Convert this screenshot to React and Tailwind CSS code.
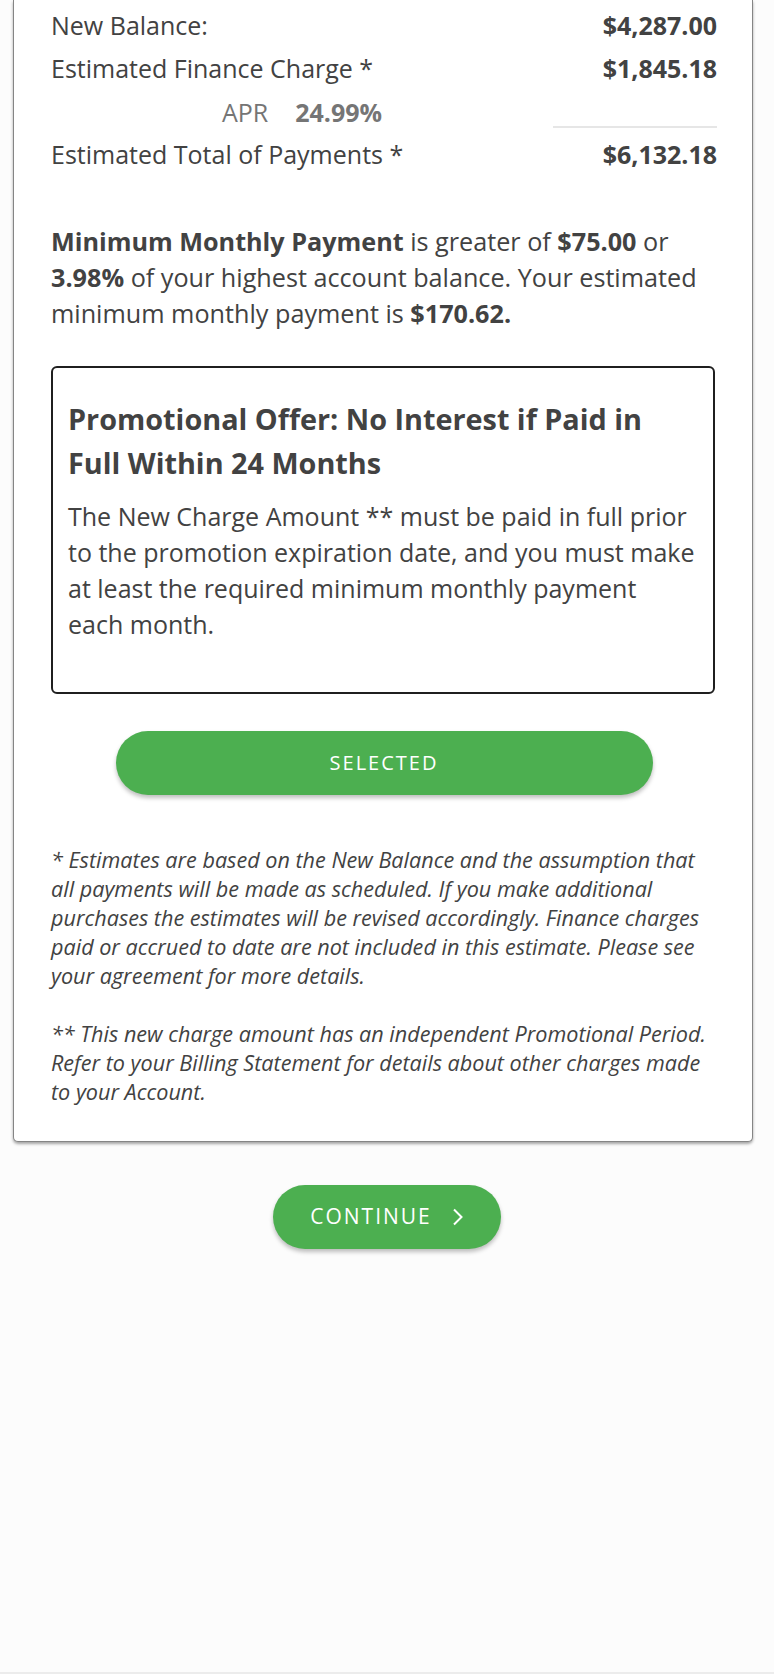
import React from 'react';

const rows = [
    { label: 'New Balance:', value: '$4,287.00' },
    { label: 'Estimated Finance Charge *', value: '$1,845.18' },
];

export default function App() {
    return (
        <div className="h-[1674px] bg-[#fcfcfc] border-b-2 border-[#ececec] font-['Open_Sans',sans-serif] text-[#424242] flex flex-col">
            <div className="ml-[13px] w-[740px] bg-white border-x border-b border-[#858585] rounded-b-[5px] shadow-[0_2px_3px_rgba(0,0,0,0.35)] pl-[37px] pr-[35px] pt-[4px] pb-[35px]">
                {rows.map((r) => (
                    <div key={r.label} className="flex justify-between h-[43px] leading-[43px] text-[25px]">
                        <span>{r.label}</span>
                        <span className="font-bold">{r.value}</span>
                    </div>
                ))}
                <div className="flex h-[38px] text-[25px]">
                    <div className="pl-[171px] pt-[7px] leading-[30px] text-[#757575]">
                        APR<span className="ml-[27px] font-bold">24.99%</span>
                    </div>
                    <div className="ml-auto w-[164px] self-end border-b-2 border-[#e6e6e6]" />
                </div>
                <div className="flex justify-between h-[43px] leading-[43px] text-[25px] mt-[5px]">
                    <span>Estimated Total of Payments *</span>
                    <span className="font-bold">$6,132.18</span>
                </div>

                <p className="mt-[47px] text-[25.2px] leading-[36px]">
                    <b>Minimum Monthly Payment</b> is greater of <b>$75.00</b> or <b>3.98%</b> of your highest account balance. Your estimated minimum monthly payment is <b>$170.62.</b>
                </p>

                <div className="mt-[35px] w-[664px] border-2 border-[#1f1f1f] rounded-[6px] pt-[29px] pb-[50px] pl-[15px] pr-[15px]">
                    <h3 className="text-[28.8px] leading-[44px] font-bold mb-[13px] pr-[30px]">
                        Promotional Offer: No Interest if Paid in Full Within 24 Months
                    </h3>
                    <p className="text-[25px] leading-[36px]">
                        The New Charge Amount ** must be paid in full prior to the promotion expiration date, and you must make at least the required minimum monthly payment each month.
                    </p>
                </div>

                <button className="block mx-auto mt-[37px] w-[537px] h-[64px] rounded-full bg-[#4caf50] text-white text-[20px] tracking-[2px] uppercase shadow-[0_3px_4px_rgba(0,0,0,0.25)]">
                    Selected
                </button>

                <div className="mt-[50px] text-[21.6px] leading-[29px] italic">
                    <p>
                        * Estimates are based on the New Balance and the assumption that all payments will be made as scheduled. If you make additional purchases the estimates will be revised accordingly. Finance charges paid or accrued to date are not included in this estimate. Please see your agreement for more details.
                    </p>
                    <p className="mt-[29px]">
                        ** This new charge amount has an independent Promotional Period. Refer to your Billing Statement for details about other charges made to your Account.
                    </p>
                </div>
            </div>

            <button className="mx-auto mt-[43px] w-[228px] h-[64px] rounded-full bg-[#4caf50] text-white text-[21px] tracking-[2px] uppercase flex items-center justify-center gap-[20px] shadow-[0_3px_4px_rgba(0,0,0,0.25)]">
                <span>Continue</span>
                <svg width="12" height="18" viewBox="0 0 12 18" fill="none" stroke="currentColor" strokeWidth="2">
                    <polyline points="2,1.5 9.5,9 2,16.5" />
                </svg>
            </button>
        </div>
    );
}
